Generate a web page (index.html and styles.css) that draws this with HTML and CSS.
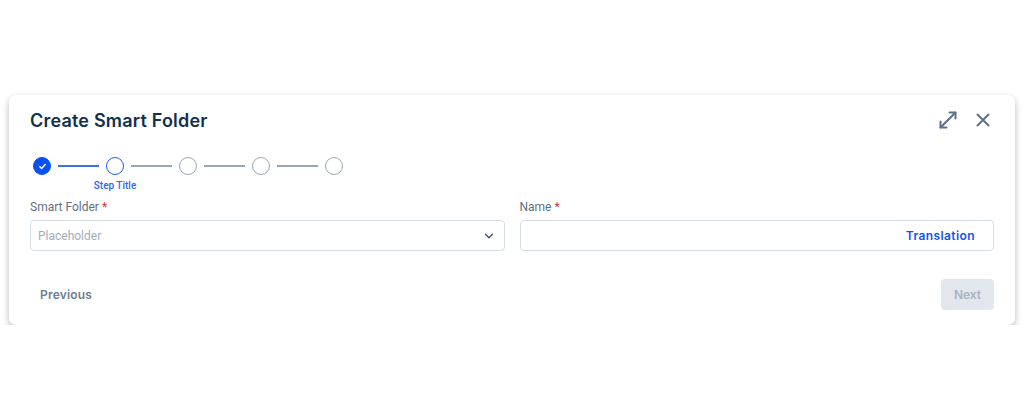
FILE: index.html
```html
<!DOCTYPE html>
<html lang="en">

<head>
    <meta charset="UTF-8">
    <meta name="viewport" content="width=device-width, initial-scale=1.0">
    <title>Create Smart Folder</title>
    <link rel="stylesheet" href="styles.css">
</head>

<body>
    <div class="modal">
        <!-- Cabecera -->
        <div class="modal-header">
            <h2>Create Smart Folder</h2>
            <div class="header-actions">
                <button class="icon-btn" title="Expand">
                    <svg width="18" height="18" viewBox="0 0 18 18" fill="none" stroke="#5b7089" stroke-width="2" stroke-linecap="round" stroke-linejoin="round">
                        <path d="M10.5 1.5h6v6" />
                        <path d="M16.5 1.5l-15 15" />
                        <path d="M1.5 10.5v6h6" />
                    </svg>
                </button>
                <button class="icon-btn" title="Close">
                    <svg width="14" height="14" viewBox="0 0 14 14" fill="none" stroke="#5b7089" stroke-width="2" stroke-linecap="round">
                        <path d="M1.5 1.5l11 11M12.5 1.5l-11 11" />
                    </svg>
                </button>
            </div>
        </div>

        <!-- Pasos -->
        <div class="stepper">
            <div class="step done">
                <span class="dot">
                    <svg width="9" height="9" viewBox="0 0 10 10" fill="none" stroke="#fff" stroke-width="1.6" stroke-linecap="round" stroke-linejoin="round">
                        <path d="M2 5.2l2 2 4-4.4" />
                    </svg>
                </span>
            </div>
            <span class="line active"></span>
            <div class="step current">
                <span class="dot"></span>
                <span class="step-title">Step Title</span>
            </div>
            <span class="line"></span>
            <div class="step"><span class="dot"></span></div>
            <span class="line"></span>
            <div class="step"><span class="dot"></span></div>
            <span class="line"></span>
            <div class="step"><span class="dot"></span></div>
        </div>

        <!-- Formulario -->
        <div class="form-grid">
            <div class="field">
                <label>Smart Folder <span class="req">*</span></label>
                <div class="input select">
                    <span class="placeholder">Placeholder</span>
                    <svg width="10" height="6" viewBox="0 0 10 6" fill="none" stroke="#4a5a6e" stroke-width="1.5" stroke-linecap="round" stroke-linejoin="round">
                        <path d="M1.5 1.2l3.5 3.5 3.5-3.5" />
                    </svg>
                </div>
            </div>
            <div class="field">
                <label>Name <span class="req">*</span></label>
                <div class="input">
                    <span></span>
                    <a href="#" class="translation">Translation</a>
                </div>
            </div>
        </div>

        <!-- Pie -->
        <div class="modal-footer">
            <button class="btn-link">Previous</button>
            <button class="btn-next" disabled>Next</button>
        </div>
    </div>
</body>

</html>
```

FILE: styles.css
```css
/* Estilos generales */
body {
    font-family: 'Roboto', sans-serif;
    background-color: #ffffff;
    margin: 0;
    padding: 95px 9px 0;
}

.modal {
    background-color: #fff;
    border-radius: 7px;
    box-shadow: 0 3px 7px rgba(0, 0, 0, 0.28);
    padding: 12px 21px 15px;
}

/* Cabecera */
.modal-header {
    display: flex;
    align-items: center;
    justify-content: space-between;
    height: 26px;
}

.modal-header h2 {
    margin: 0;
    font-family: 'Inter', sans-serif;
    font-size: 18px;
    font-weight: 600;
    color: #12304f;
    letter-spacing: 0.2px;
}

.header-actions {
    display: flex;
    align-items: center;
    gap: 19px;
    padding-right: 4px;
}

.icon-btn {
    background: none;
    border: none;
    padding: 0;
    display: flex;
    cursor: pointer;
}

/* Pasos */
.stepper {
    display: flex;
    align-items: center;
    margin-top: 24px;
    padding-left: 3px;
    height: 18px;
}

.step {
    position: relative;
    width: 18px;
    height: 18px;
}

.dot {
    box-sizing: border-box;
    width: 18px;
    height: 18px;
    border-radius: 50%;
    border: 1.5px solid #9aa6b5;
    display: flex;
    align-items: center;
    justify-content: center;
    background: #fff;
}

.step.done .dot {
    background-color: #0b50f0;
    border-color: #0b50f0;
}

.step.current .dot {
    border-color: #1f5cf0;
}

.step-title {
    position: absolute;
    top: 23px;
    left: 50%;
    transform: translateX(-50%);
    white-space: nowrap;
    font-size: 10px;
    font-weight: 500;
    color: #2d66f0;
}

.line {
    width: 41px;
    height: 1.5px;
    margin: 0 7px;
    background-color: #9aa6b5;
}

.line.active {
    background-color: #3a6ff2;
}

/* Formulario */
.form-grid {
    display: grid;
    grid-template-columns: 1fr 1fr;
    gap: 15px;
    margin-top: 25px;
}

.field label {
    display: block;
    font-size: 12px;
    color: #5f6f83;
    margin-bottom: 6px;
    line-height: 14px;
}

.req {
    color: #e0323a;
}

.input {
    box-sizing: border-box;
    height: 31px;
    border: 1px solid #d6dce4;
    border-radius: 4px;
    display: flex;
    align-items: center;
    justify-content: space-between;
    padding: 0 10px 0 7px;
}

.select {
    padding-right: 10px;
}

.placeholder {
    font-size: 12px;
    color: #a3adba;
}

.translation {
    font-family: 'Inter', sans-serif;
    font-size: 12px;
    font-weight: 600;
    letter-spacing: 0.4px;
    color: #1553f0;
    text-decoration: none;
    padding-right: 8px;
}

/* Pie */
.modal-footer {
    display: flex;
    align-items: center;
    justify-content: space-between;
    margin-top: 28px;
}

.btn-link {
    background: none;
    border: none;
    padding: 0 10px;
    font-family: 'Inter', sans-serif;
    font-size: 12px;
    font-weight: 600;
    letter-spacing: 0.2px;
    color: #6d7d92;
    cursor: pointer;
}

.btn-next {
    width: 53px;
    height: 31px;
    border: none;
    border-radius: 4px;
    background-color: #e2e6ed;
    color: #a9b3c1;
    font-family: 'Inter', sans-serif;
    font-size: 12px;
    font-weight: 600;
}
```
